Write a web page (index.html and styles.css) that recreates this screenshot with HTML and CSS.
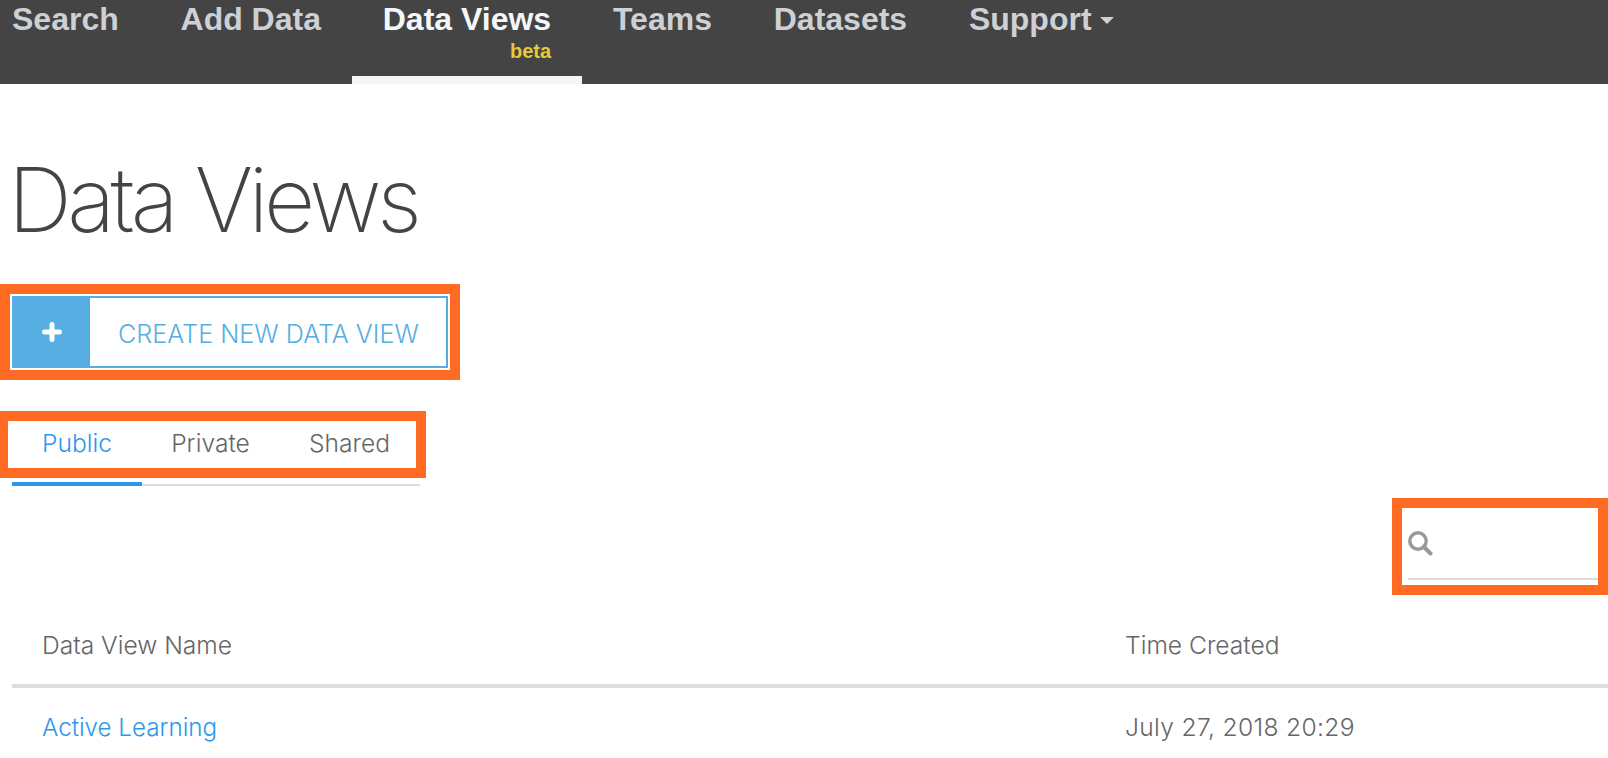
FILE: index.html
```html
<!DOCTYPE html>
<html>
<head>
    <meta charset="utf-8">
    <link rel="stylesheet" href="styles.css">
</head>
<body>
    <nav class="navbar">
        <a class="nav-item">Search</a>
        <a class="nav-item">Add Data</a>
        <a class="nav-item active">Data Views<span class="beta">beta</span></a>
        <a class="nav-item">Teams</a>
        <a class="nav-item">Datasets</a>
        <a class="nav-item">Support<span class="caret"></span></a>
    </nav>

    <main>
        <h1 class="title">Data Views</h1>

        <div class="callout callout-create">
            <a class="create-btn">
                <span class="create-icon">
                    <svg width="20" height="20" viewBox="0 0 20 20"><path d="M10 2.5v15M2.5 10h15" stroke="#fff" stroke-width="5" stroke-linecap="round"/></svg>
                </span>
                <span class="create-label">CREATE NEW DATA VIEW</span>
            </a>
        </div>

        <div class="callout callout-tabs">
            <a class="tab tab-active">Public</a>
            <a class="tab">Private</a>
            <a class="tab">Shared</a>
        </div>
        <div class="tab-rule"><div class="tab-rule-active"></div></div>

        <div class="callout callout-search">
            <div class="search-box">
                <svg width="26" height="26" viewBox="0 0 26 26"><circle cx="10" cy="11" r="8.2" fill="none" stroke="#999" stroke-width="3.4"/><path d="M16 17l6.5 6.5" stroke="#999" stroke-width="4" stroke-linecap="round"/></svg>
            </div>
        </div>

        <div class="table">
            <div class="table-row table-head">
                <div>Data View Name</div>
                <div>Time Created</div>
            </div>
            <div class="table-row">
                <div><a class="link">Active Learning</a></div>
                <div class="date">July 27, 2018 20:29</div>
            </div>
        </div>
    </main>
</body>
</html>
```

FILE: styles.css
```css
html, body {
    height: 758px;
    overflow: hidden;
}

body {
    margin: 0;
    background: #ffffff;
    font-family: Inter, "Liberation Sans", sans-serif;
    font-weight: 300;
    color: #666666;
}

/* top bar */
.navbar {
    display: flex;
    height: 84px;
    background: #444444;
    font-family: "Liberation Sans", Arial, sans-serif;
    font-weight: 700;
    font-size: 32px;
    line-height: 38px;
}

.nav-item {
    position: relative;
    height: 84px;
    padding: 0 30.9px;
    box-sizing: border-box;
    color: #cdd0d4;
}

.nav-item:first-child {
    padding-left: 12px;
}

.nav-item.active {
    color: #f4f7f9;
    border-bottom: 8px solid #f4f7f9;
}

.beta {
    position: absolute;
    right: 30.9px;
    top: 40px;
    font-size: 20px;
    line-height: 22px;
    color: #e6c83c;
}

.caret {
    display: inline-block;
    margin-left: 8px;
    vertical-align: 6px;
    border-top: 7px solid #cdd0d4;
    border-left: 7px solid transparent;
    border-right: 7px solid transparent;
}

/* heading */
.title {
    margin: 0;
    padding: 66px 0 0 8px;
    height: 134px;
    font-size: 89px;
    letter-spacing: -4.5px;
    line-height: 100px;
    font-weight: 200;
    color: #444444;
}

/* orange callouts */
.callout {
    box-sizing: border-box;
    border: 10px solid #ff6b22;
}

.callout-create {
    width: 460px;
    height: 96px;
    padding: 2px;
}

.create-btn {
    display: flex;
    height: 72px;
    box-sizing: border-box;
    border: 2px solid #56aee2;
    color: #56aee2;
}

.create-icon {
    display: flex;
    align-items: center;
    justify-content: center;
    width: 76px;
    background: #56aee2;
}

.create-label {
    padding-left: 28px;
    font-size: 25.2px;
    line-height: 72px;
}

.callout-tabs {
    display: flex;
    width: 426px;
    height: 67px;
    margin-top: 31px;
    border-left-width: 8px;
    padding-left: 4px;
    font-size: 24.6px;
    line-height: 44px;
}

.tab {
    padding: 0 29.6px;
}

.tab:first-child {
    padding-left: 30px;
}

.tab-active {
    color: #2b97ee;
}

.tab-rule {
    width: 408px;
    height: 2px;
    margin: 6px 0 0 12px;
    background: #dddddd;
}

.tab-rule-active {
    position: relative;
    top: -2px;
    width: 130px;
    height: 4px;
    background: #2b97ee;
}

/* search */
.callout-search {
    width: 216px;
    height: 97px;
    margin: 12px 0 0 auto;
    padding-left: 6px;
}

.search-box {
    height: 72px;
    box-sizing: border-box;
    padding-top: 22px;
    border-bottom: 2px solid #dddddd;
}

.search-box svg {
    display: block;
}

/* table */
.table {
    margin: 0 0 0 12px;
}

.table-row {
    display: grid;
    grid-template-columns: 1083px 1fr;
    padding: 0 30px;
    font-size: 24.6px;
    line-height: 40px;
}

.table-head {
    height: 93px;
    padding-top: 30px;
    box-sizing: border-box;
    border-bottom: 4px solid #dddddd;
}

.table-row:not(.table-head) {
    padding-top: 19px;
}

.link {
    color: #2b97ee;
    font-size: 24.2px;
}

.date {
    letter-spacing: 0.33px;
}
```
